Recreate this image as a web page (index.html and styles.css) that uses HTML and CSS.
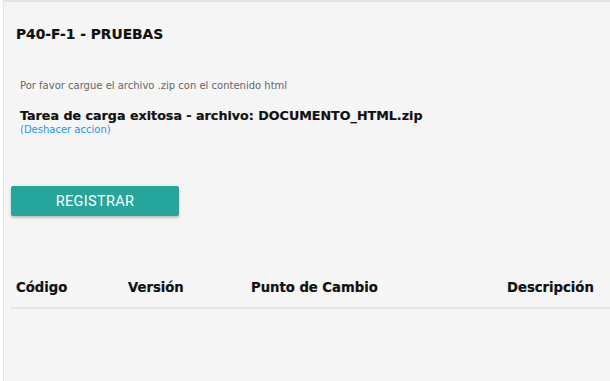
FILE: index.html
```html
<!DOCTYPE html>
<html lang="es">
<head>
<meta charset="utf-8">
<link rel="stylesheet" href="styles.css">
</head>
<body>
<div class="panel">
  <h1 class="title">P40-F-1 - PRUEBAS</h1>
  <p class="hint">Por favor cargue el archivo .zip con el contenido html</p>
  <p class="status">Tarea de carga exitosa - archivo: DOCUMENTO_HTML.zip</p>
  <a class="undo" href="#">(Deshacer accion)</a>
  <button class="btn">REGISTRAR</button>
  <div class="table-head">
    <span class="col c1">Código</span>
    <span class="col c2">Versión</span>
    <span class="col c3">Punto de Cambio</span>
    <span class="col c4">Descripción</span>
  </div>
</div>
</body>
</html>
```
FILE: styles.css
```css
html, body {
  margin: 0;
  padding: 0;
  background: #ffffff;
  height: 100%;
  overflow: hidden;
}
body {
  padding-left: 3px;
  font-family: "DejaVu Sans", Verdana, sans-serif;
  color: #111;
}
.panel {
  background: #f5f5f5;
  border-top: 2px solid #e2e2e2;
  border-left: 1px solid #e4e4e4;
  height: 100%;
  padding: 0 0 0 7px;
  box-sizing: border-box;
  display: flex;
  flex-direction: column;
  align-items: flex-start;
}
.title {
  margin: 24px 0 0 5px;
  font-size: 13.8px;
  font-weight: bold;
  line-height: 16px;
  -webkit-text-stroke: 0.2px #111;
}
.hint {
  margin: 38px 0 0 9px;
  font-size: 10px;
  color: #666;
  line-height: 12px;
}
.status {
  margin: 16px 0 0 9px;
  font-size: 12.7px;
  font-weight: bold;
  line-height: 16px;
  -webkit-text-stroke: 0.2px #111;
}
.undo {
  margin: 0 0 0 9px;
  font-size: 10px;
  line-height: 12px;
  color: #2196f3;
  text-decoration: none;
}
.btn {
  margin: 50px 0 0 0;
  width: 168px;
  height: 30px;
  background: #26a69a;
  color: #fff;
  border: none;
  border-radius: 2px;
  box-shadow: 0 2px 2px rgba(0,0,0,0.14), 0 1px 4px rgba(0,0,0,0.12);
  font-family: Roboto, sans-serif;
  font-size: 14.5px;
  letter-spacing: 0.3px;
}
.table-head {
  margin-top: 64px;
  align-self: stretch;
  display: grid;
  grid-template-columns: 112px 123px 256px 1fr;
  padding: 0 5px 11px 5px;
  border-bottom: 2px solid #e6e6e6;
  font-size: 13.2px;
  font-weight: bold;
  line-height: 16px;
  -webkit-text-stroke: 0.2px #111;
}
```
